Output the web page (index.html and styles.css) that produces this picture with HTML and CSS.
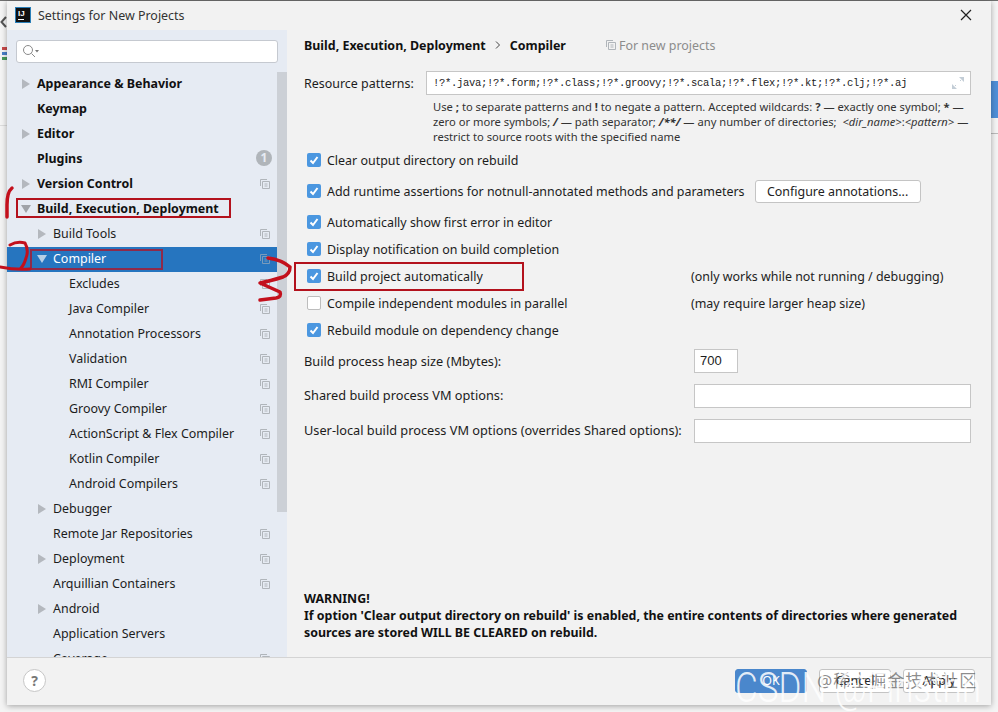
FILE: index.html
```html
<!DOCTYPE html>
<html lang="en">
<head>
<meta charset="utf-8">
<title>Settings for New Projects</title>
<link rel="stylesheet" href="styles.css">
</head>
<body>
<div class="backdrop">
  <div class="back-left">
    <svg class="back-arrow" width="7" height="14" viewBox="0 0 7 14"><path d="M6 2 1.500 7 6 12" fill="none" stroke="#555" stroke-width="2"/></svg>
    <svg class="back-grid" width="7" height="15" viewBox="0 0 7 15"><path d="M2 1h5v3H2z" fill="#c84a4a"/><path d="M2 6h5v3H2z" fill="#4a7fc8"/><path d="M2 11h5v3H2z" fill="#4a9a5a"/></svg>
  </div>
  <div class="back-right"><span class="back-blue"></span></div>
</div>
<main class="dialog">
  <header class="titlebar">
    <svg class="app-logo" width="16" height="16" viewBox="0 0 16 16"><rect width="16" height="16" fill="#2a7fb8"/><rect x="1" y="1" width="14" height="14" fill="#111"/><rect x="3" y="12" width="6" height="1" fill="#fff"/><text x="3" y="9" class="logo-text">IJ</text></svg>
    <span class="title">Settings for New Projects</span>
    <svg class="close" width="12" height="12" viewBox="0 0 12 12"><path d="M1 1l10 10M11 1 1 11" stroke="#222" stroke-width="1.200"/></svg>
  </header>
  <div class="body">
    <aside class="sidebar">
      <div class="search-wrap">
        <div class="search">
          <svg width="18" height="14" viewBox="0 0 18 14"><circle cx="6" cy="6" r="4.500" fill="none" stroke="#8a8a8a"/><path d="M9.500 9.500 13 13" stroke="#8a8a8a"/><path d="M13 6h4l-2 2.500z" fill="#777"/></svg>
        </div>
      </div>
      <div class="tree-wrap">
        <ul class="tree">
          <li class="row bold"><i class="arrow right"></i>Appearance &amp; Behavior</li>
          <li class="row bold"><i class="arrow none"></i>Keymap</li>
          <li class="row bold"><i class="arrow right"></i>Editor</li>
          <li class="row bold"><i class="arrow none"></i>Plugins<span class="badge">1</span></li>
          <li class="row bold copy"><i class="arrow right"></i>Version Control</li>
          <li class="row bold"><i class="arrow down"></i>Build, Execution, Deployment</li>
          <li class="row l1 copy"><i class="arrow right"></i>Build Tools</li>
          <li class="row l1 copy selected"><i class="arrow down"></i>Compiler</li>
          <li class="row l2 copy">Excludes</li>
          <li class="row l2 copy">Java Compiler</li>
          <li class="row l2 copy">Annotation Processors</li>
          <li class="row l2 copy">Validation</li>
          <li class="row l2 copy">RMI Compiler</li>
          <li class="row l2 copy">Groovy Compiler</li>
          <li class="row l2 copy">ActionScript &amp; Flex Compiler</li>
          <li class="row l2 copy">Kotlin Compiler</li>
          <li class="row l2 copy">Android Compilers</li>
          <li class="row l1"><i class="arrow right"></i>Debugger</li>
          <li class="row l1 copy"><i class="arrow none"></i>Remote Jar Repositories</li>
          <li class="row l1 copy"><i class="arrow right"></i>Deployment</li>
          <li class="row l1 copy"><i class="arrow none"></i>Arquillian Containers</li>
          <li class="row l1"><i class="arrow right"></i>Android</li>
          <li class="row l1"><i class="arrow none"></i>Application Servers</li>
          <li class="row l1 copy"><i class="arrow none"></i>Coverage</li>
        </ul>
        <div class="scrollbar"><span class="thumb"></span></div>
      </div>
    </aside>
    <section class="content">
      <div class="crumbs">
        <b>Build, Execution, Deployment</b>
        <svg class="chev" width="6" height="8" viewBox="0 0 6 8"><path d="M1 .5 4.500 4 1 7.500" fill="none" stroke="#444"/></svg>
        <b>Compiler</b>
        <span class="for-new"><span class="copy-glyph"></span>For new projects</span>
      </div>
      <div class="res-row">
        <label class="res-label">Resource patterns:</label>
        <div class="res-input"><span class="mono">!?*.java;!?*.form;!?*.class;!?*.groovy;!?*.scala;!?*.flex;!?*.kt;!?*.clj;!?*.aj</span>
          <svg class="expand" width="14" height="14" viewBox="0 0 14 14"><path d="M8 1h5v5zM1 8v5h5z" fill="#c3cdd6"/><path d="M9 5l1-1M4 10l1-1" stroke="#c3cdd6"/></svg>
        </div>
      </div>
      <p class="hint">Use <b>;</b> to separate patterns and <b>!</b> to negate a pattern. Accepted wildcards: <b>?</b> — exactly one symbol; <b>*</b> —<br>zero or more symbols; <b><i>/</i></b> — path separator; <b><i>/**/</i></b> — any number of directories; <i>&nbsp;&lt;dir_name&gt;</i>:<i>&lt;pattern&gt;</i> —<br>restrict to source roots with the specified name</p>
      <div class="check gap-a"><span class="box on"></span>Clear output directory on rebuild</div>
      <div class="check gap-b"><span class="box on"></span>Add runtime assertions for notnull-annotated methods and parameters<button class="config">Configure annotations...</button></div>
      <div class="check gap-b"><span class="box on"></span>Automatically show first error in editor</div>
      <div class="check gap-c"><span class="box on"></span>Display notification on build completion</div>
      <div class="check gap-c"><span class="box on"></span><span class="cl">Build project automatically</span><span class="note">(only works while not running / debugging)</span></div>
      <div class="check gap-c"><span class="box"></span><span class="cl">Compile independent modules in parallel</span><span class="note">(may require larger heap size)</span></div>
      <div class="check gap-c"><span class="box on"></span>Rebuild module on dependency change</div>
      <div class="field f1"><label>Build process heap size (Mbytes):</label><span class="input small">700</span></div>
      <div class="field f2"><label>Shared build process VM options:</label><span class="input"></span></div>
      <div class="field f2"><label>User-local build process VM options (overrides Shared options):</label><span class="input"></span></div>
      <p class="warning">WARNING!<br>If option 'Clear output directory on rebuild' is enabled, the entire contents of directories where generated<br>sources are stored WILL BE CLEARED on rebuild.</p>
    </section>
  </div>
  <footer class="footer">
    <span class="help">?</span>
    <div class="buttons">
      <button class="btn primary">OK</button>
      <button class="btn">Cancel</button>
      <button class="btn">Apply</button>
    </div>
  </footer>
</main>
<svg class="marks" width="998" height="712" viewBox="0 0 998 712">
  <g fill="none" stroke="#b3121d" stroke-width="2">
    <rect x="17" y="199" width="213" height="18"/>
    <rect x="31" y="250" width="131" height="19" stroke="#8f2a4a"/>
    <rect x="295" y="263" width="228" height="27"/>
  </g>
  <g fill="none" stroke="#c3101c" stroke-linecap="round" stroke-linejoin="round" stroke-width="3">
    <path d="M12 188Q7 192 7 205 L7 217" stroke-width="3.500"/>
    <path d="M10 245Q17 241 25 243 29 250 26 258 24 265 21 268M0 267Q15 270 30 269"/>
    <path d="M268 258Q282 260 290 267 290 274 283 277 270 281 260 283L280 292Q282 297 276 298L260 300" stroke-width="3.500"/>
  </g>
</svg>
<div class="wm-gray">@稀土掘金技术社区</div>
<div class="wm-white">CSDN @Finsthn</div>
</body>
</html>
```
FILE: styles.css
```css
* { box-sizing: border-box; }
html, body { margin: 0; padding: 0; }
body {
  position: relative;
  width: 998px;
  height: 712px;
  overflow: hidden;
  background: #f4f4f4;
  font-family: "Noto Sans", "Noto Sans CJK SC", sans-serif;
  font-size: 12.450px;
  color: #1c1c1c;
}
ul { list-style: none; margin: 0; padding: 0; }
p { margin: 0; }

.backdrop { position: absolute; inset: 0; border-top: 1px solid #707070; }
.back-left { position: absolute; left: 0; top: 0; width: 7px; height: 125px; background: #f5f5f5; border-bottom: 1px solid #ddd; }
.back-arrow { position: absolute; left: 0; top: 14px; }
.back-grid { position: absolute; left: 0; top: 45px; }
.back-right { position: absolute; right: 0; top: 0; width: 7px; height: 133px; background: #f5f5f5; border-bottom: 1px solid #bbb; }
.back-blue { position: absolute; left: 0; top: 80px; width: 7px; height: 37px; background: #4f8fd8; }

.dialog {
  position: absolute;
  left: 7px;
  top: 1px;
  width: 984px;
  height: 704px;
  background: #f2f2f2;
  box-shadow: 0 1px 6px rgba(0,0,0,.35);
  display: flex;
  flex-direction: column;
}
.titlebar { height: 29px; display: flex; align-items: center; padding: 0 24px 1px 8px; flex: none; }
.app-logo { flex: none; }
.logo-text { font: bold 8px "Liberation Sans", sans-serif; fill: #fff; }
.title { margin-left: 7px; color: #333; }
.close { margin-left: auto; margin-right: -5px; }

.body { flex: 1; display: flex; min-height: 0; }
.sidebar { width: 280px; flex: none; background: #e6ebf3; display: flex; flex-direction: column; overflow: hidden; }
.search-wrap { padding: 10px 9px 9px; flex: none; }
.search { height: 23px; background: #fff; border: 1px solid #c5c9d0; border-radius: 3px; padding: 3px 0 0 5px; }
.search svg { display: block; }
.tree-wrap { position: relative; flex: 1; min-height: 0; overflow: hidden; }
.row {
  position: relative;
  height: 25px;
  display: flex;
  align-items: center;
  padding-left: 15px;
  padding-bottom: 2px;
  white-space: nowrap;
}
.row.bold { font-weight: 700; color: #111; }
.row.l1 { padding-left: 31px; }
.row.l2 { padding-left: 62px; }
.row.selected { background: #2675bf; color: #fff; }
.row.copy::after {
  content: "";
  position: absolute;
  right: 17px;
  top: 7px;
  width: 10px;
  height: 10px;
  background: url("data:image/svg+xml,%3Csvg xmlns='http://www.w3.org/2000/svg' width='10' height='10'%3E%3Cpath d='M.5 7V.5H7M2.500 2.500h7v7h-7zM4.500 5h3M4.500 7h3' fill='none' stroke='%23b0b5ba'/%3E%3C/svg%3E");
}
.row.selected.copy::after { opacity: .6; }
.arrow { flex: none; width: 15px; height: 11px; display: block; }
.arrow.right { width: 0; height: 0; margin-right: 7px; border-style: solid; border-width: 5px 0 5px 8px; border-color: transparent transparent transparent #b4b8be; }
.arrow.down { width: 0; height: 0; margin-left: -1px; margin-right: 6px; border-style: solid; border-width: 8px 5px 0 5px; border-color: #a0a3a8 transparent transparent transparent; }
.row.selected .arrow.down { border-top-color: #b7cfe6; }
.badge {
  position: absolute;
  right: 15px;
  top: 3px;
  width: 16px;
  height: 16px;
  border-radius: 50%;
  background: #b0b5ba;
  color: #e6ebf3;
  font-size: 12px;
  font-weight: 700;
  line-height: 16px;
  text-align: center;
}
.scrollbar { position: absolute; right: 0; top: 0; bottom: 0; width: 10px; }
.thumb { display: block; height: 440px; background: #ccd0d6; }

.content { flex: 1; min-width: 0; padding: 5px 20px 0 17px; }
.crumbs { height: 20px; display: flex; align-items: center; color: #111; }
.crumbs .chev { margin: 0 9px; }
.for-new { display: flex; align-items: center; margin-left: 40px; color: #8c8c8c; }
.copy-glyph {
  width: 10px;
  height: 10px;
  margin-right: 3px;
  background: url("data:image/svg+xml,%3Csvg xmlns='http://www.w3.org/2000/svg' width='10' height='10'%3E%3Cpath d='M.5 7V.5H7M2.500 2.500h7v7h-7zM4.500 5h3M4.500 7h3' fill='none' stroke='%23b0b5ba'/%3E%3C/svg%3E");
}
.res-row { display: flex; align-items: center; margin-top: 16px; }
.res-label { width: 122px; flex: none; }
.res-input {
  flex: 1;
  height: 24px;
  background: #fff;
  border: 1px solid #c6c6c6;
  display: flex;
  align-items: center;
  justify-content: space-between;
  padding: 0 5px 0 6px;
}
.mono { font-family: "Liberation Mono", monospace; font-size: 10.500px; letter-spacing: -.3px; white-space: nowrap; color: #222; }
.expand { flex: none; }
.hint { margin: 4px 0 0 129px; font-size: 11.200px; line-height: 15px; color: #333; white-space: nowrap; }

.check { display: flex; align-items: center; height: 24px; white-space: nowrap; }
.gap-a { margin-top: 4px; }
.gap-b { margin-top: 7px; }
.gap-c { margin-top: 3px; }
.box { flex: none; width: 14px; height: 14px; margin: 0 6px 0 3px; border: 1px solid #bdbdbd; border-radius: 2px; background: #fff; }
.box.on {
  border: 0;
  background: #4b97e0 url("data:image/svg+xml,%3Csvg xmlns='http://www.w3.org/2000/svg' width='14' height='14'%3E%3Cpath d='M3.500 7.500 6 10l4.500-6' fill='none' stroke='%23fff' stroke-width='2'/%3E%3C/svg%3E");
}
.cl { width: 364px; flex: none; }
.note { color: #222; }
.config {
  margin-left: 10px;
  height: 23px;
  width: 166px;
  padding: 0;
  background: #fff;
  border: 1px solid #c4c4c4;
  border-radius: 3px;
  font: inherit;
  color: #222;
}
.field { display: flex; align-items: center; white-space: nowrap; }
.field label { width: 390px; flex: none; font-size: 12.750px; }
.f1 { margin-top: 7px; }
.f2 { margin-top: 11px; }
.f2 label { padding-bottom: 2px; }
.input { flex: 1; height: 24px; background: #fff; border: 1px solid #c6c6c6; display: block; }
.input.small { flex: none; width: 44px; padding-left: 5px; line-height: 22px; font-family: "Liberation Sans", sans-serif; font-size: 13px; }
.warning { margin-top: 147px; font-weight: 700; line-height: 17px; color: #111; white-space: nowrap; font-size: 12.400px; }

.footer { flex: none; height: 48px; border-top: 1px solid #d4d4d4; display: flex; align-items: center; padding: 0 16px 2px 16px; justify-content: space-between; background: #f2f2f2; }
.help { width: 23px; height: 23px; border: 1px solid #c6c6c6; border-radius: 50%; background: #fff; text-align: center; font-size: 14px; font-weight: 700; line-height: 21px; color: #777; }
.buttons { display: flex; gap: 12px; }
.btn { width: 72px; height: 24px; padding: 0; border: 1px solid #c4c4c4; border-radius: 3px; background: #fff; font: inherit; color: #222; }
.btn.primary { background: #4a87cc; border-color: #4a87cc; color: #fff; }

.marks { position: absolute; left: 0; top: 0; pointer-events: none; }
.wm-gray { position: absolute; left: 817px; top: 670px; font-size: 17px; line-height: 22px; letter-spacing: 1px; color: rgba(90,90,90,.7); white-space: nowrap; }
.wm-white { position: absolute; left: 735px; top: 662px; font-family: Roboto, "Liberation Sans", sans-serif; font-weight: 300; font-size: 35px; line-height: 44px; letter-spacing: 0; color: rgba(255,255,255,.85); white-space: nowrap; transform: scaleY(1.2); transform-origin: left top; }
```
